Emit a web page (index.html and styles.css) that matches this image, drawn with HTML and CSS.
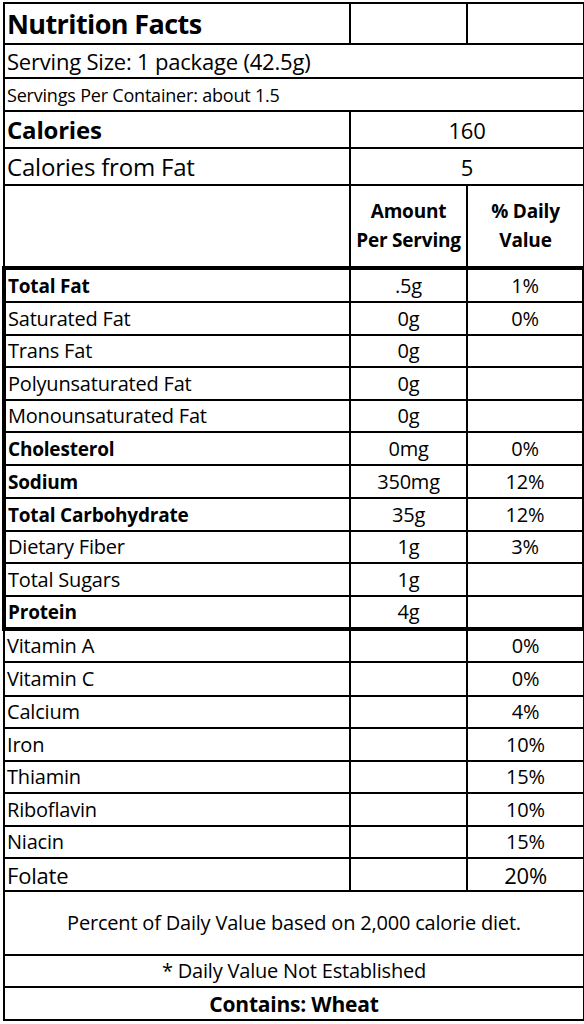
FILE: index.html
```html
<!DOCTYPE html>
<html lang="en">
<head>
    <meta charset="UTF-8">
    <title>Nutrition Facts</title>
    <link rel="stylesheet" href="styles.css">
</head>
<body>
    <!--营养成分表-->
    <table class="facts">
        <colgroup>
            <col class="colName">
            <col class="colAmount">
            <col class="colDaily">
        </colgroup>
        <tbody>
            <tr class="rowTitle">
                <td class="title">Nutrition Facts</td>
                <td></td>
                <td></td>
            </tr>
            <tr class="rowServing">
                <td colspan="3" class="serving">Serving Size: 1 package (42.5g)</td>
            </tr>
            <tr class="rowPer">
                <td colspan="3" class="small">Servings Per Container: about 1.5</td>
            </tr>
            <tr class="rowCal">
                <td class="big bold">Calories</td>
                <td colspan="2" class="num mid">160</td>
            </tr>
            <tr class="rowCal">
                <td class="big">Calories from Fat</td>
                <td colspan="2" class="num mid">5</td>
            </tr>
            <tr class="rowHead">
                <td></td>
                <td class="num bold">Amount<br>Per Serving</td>
                <td class="num bold">% Daily<br>Value</td>
            </tr>
        </tbody>
        <!--粗框部分-->
        <tbody class="nutrients">
            <tr class="tall"><td class="bold">Total Fat</td><td class="num">.5g</td><td class="num">1%</td></tr>
            <tr><td>Saturated Fat</td><td class="num">0g</td><td class="num">0%</td></tr>
            <tr class="short"><td>Trans Fat</td><td class="num">0g</td><td></td></tr>
            <tr><td>Polyunsaturated Fat</td><td class="num">0g</td><td></td></tr>
            <tr class="short"><td>Monounsaturated Fat</td><td class="num">0g</td><td></td></tr>
            <tr><td class="bold">Cholesterol</td><td class="num">0mg</td><td class="num">0%</td></tr>
            <tr><td class="bold">Sodium</td><td class="num">350mg</td><td class="num">12%</td></tr>
            <tr><td class="bold">Total Carbohydrate</td><td class="num">35g</td><td class="num">12%</td></tr>
            <tr class="short"><td>Dietary Fiber</td><td class="num">1g</td><td class="num">3%</td></tr>
            <tr><td>Total Sugars</td><td class="num">1g</td><td></td></tr>
            <tr><td class="bold">Protein</td><td class="num">4g</td><td></td></tr>
        </tbody>
        <tbody>
            <tr><td>Vitamin A</td><td></td><td class="num">0%</td></tr>
            <tr class="tall"><td>Vitamin C</td><td></td><td class="num">0%</td></tr>
            <tr class="short"><td>Calcium</td><td></td><td class="num">4%</td></tr>
            <tr><td>Iron</td><td></td><td class="num">10%</td></tr>
            <tr class="short"><td>Thiamin</td><td></td><td class="num">15%</td></tr>
            <tr><td>Riboflavin</td><td></td><td class="num">10%</td></tr>
            <tr class="short"><td>Niacin</td><td></td><td class="num">15%</td></tr>
            <tr><td class="mid">Folate</td><td></td><td class="num mid">20%</td></tr>
            <tr class="rowNote">
                <td colspan="3" class="num">Percent of Daily Value based on 2,000 calorie diet.</td>
            </tr>
            <tr class="short">
                <td colspan="3" class="num">* Daily Value Not Established</td>
            </tr>
            <tr>
                <td colspan="3" class="num bold contains">Contains: Wheat</td>
            </tr>
        </tbody>
    </table>
</body>
</html>
```

FILE: styles.css
```css
*{
    padding: 0;
    margin: 0;
}
body{
    background-color: #fff;
    color: #000;
    font-family: "Open Sans", "Lato", sans-serif;
    padding: 2px 0 0 2px;
}
.facts{
    width: 580px;
    border-collapse: collapse;
    table-layout: fixed;
}
.facts .colName{
    width: 346px;
}
.facts .colAmount{
    width: 117px;
}
.facts .colDaily{
    width: 117px;
}
.facts td{
    border: 2px solid #000;
    padding: 0 2px;
    font-size: 20px;
    line-height: 24px;
    letter-spacing: -0.2px;
    white-space: nowrap;
    vertical-align: middle;
}
.facts td.bold{
    font-size: 19px;
}
.facts tr{
    height: 33px;
}
.facts tr.short{
    height: 32px;
}
.facts tr.tall{
    height: 34px;
}
.facts .rowTitle{
    height: 41px;
}
.facts .rowServing{
    height: 34px;
}
.facts .rowCal{
    height: 37px;
}
.facts .rowHead{
    height: 83px;
}
.facts .rowHead td{
    line-height: 29px;
}
.facts .rowNote{
    height: 64px;
}
.facts .nutrients{
    border: 4px solid #000;
}
.facts td.title{
    font-size: 27px;
    font-weight: bold;
    letter-spacing: -0.6px;
}
.facts .serving{
    font-size: 22px;
}
.facts .small{
    font-size: 18px;
}
.facts td.big{
    font-size: 24px;
}
.facts .mid{
    font-size: 22px;
}
.facts .bold{
    font-weight: bold;
}
.facts .num{
    text-align: center;
}
.facts td.contains{
    font-size: 21px;
}
```
